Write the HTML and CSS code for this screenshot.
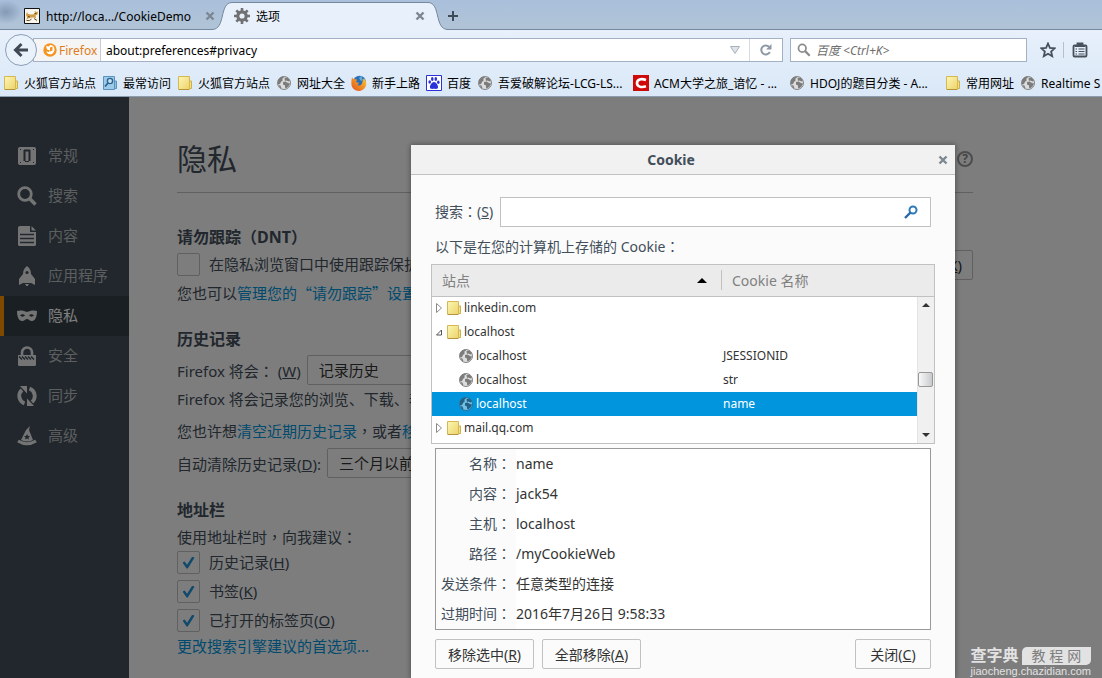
FILE: index.html
```html
<!DOCTYPE html>
<html lang="zh-CN">
<head>
<meta charset="utf-8">
<title>选项</title>
<link rel="stylesheet" href="styles.css">
</head>
<body>
<svg class="defs" aria-hidden="true">
  <defs>
    <linearGradient id="folder-fill" x1="0" y1="0" x2="1" y2="1"><stop offset="0" stop-color="#fdf6b8"/><stop offset="1" stop-color="#ecd366"/></linearGradient>
    <linearGradient id="fox-fill" x1="1" y1="0" x2="0" y2="1"><stop offset="0" stop-color="#ffcb2e"/><stop offset="1" stop-color="#e2501c"/></linearGradient>
  </defs>
  <symbol id="folder" viewBox="0 0 16 16">
    <path d="M12 6h2.500v7.500h-3z" fill="#f3df80" stroke="#cdb04a"/>
    <path d="M1.500 1.500h11v13h-11z" fill="url(#folder-fill)" stroke="#d3b854"/>
    <path d="M2 14.500h10" stroke="#b3943c"/>
  </symbol>
  <symbol id="smart-folder" viewBox="0 0 16 16">
    <path d="M12 6h2.500v7.500h-3z" fill="#8fc0e2" stroke="#5c93bd"/>
    <path d="M1.500 1.500h11v13h-11z" fill="#9ccbea" stroke="#5c93bd"/>
    <circle cx="8" cy="6" r="2.600" fill="#c6e3f5" stroke="#2f6491" stroke-width="1.400"/>
    <path d="M6 8l-3 3.500" stroke="#2f6491" stroke-width="1.800"/>
  </symbol>
  <symbol id="globe" viewBox="0 0 16 16">
    <circle cx="8" cy="8" r="6.500" fill="currentColor" stroke="#858585"/>
    <path d="M2 5l2-2.500 3-1 1 1-2 1.500 1 1-2 2-1 2-2 .5zM8.500 3l3-.5 2.500 3-1.500 1-2-1-1.500.5zM7 7l2.500-.5 2.500 1.500 2 .5-1.500 3-2.500 2-1-1 0-2-2-1zM2.500 10l2 .5 1 3-1.500-.5z" fill="#7c7c7c"/>
  </symbol>
  <symbol id="firefox" viewBox="0 0 16 16">
    <circle cx="8.500" cy="7" r="6.300" fill="#2c6fb5"/>
    <path d="M8 3c1-1.500 3-2 4-1.500l-1.500 1.500 1.500 2-2 1z" fill="#5fb0df"/>
    <path d="M1 2.500l1.500 1.500L6 4.500 5 7l3 1-1.500 2c2.500 1.500 5-.5 5-3.500l1-3c2 1 3 3 2.700 6-.5 4-4 6.500-7.500 6.500C4 16 .5 13 .4 9 .3 6 .6 4 1 2.500z" fill="url(#fox-fill)"/>
  </symbol>
  <symbol id="close" viewBox="0 0 10 10"><path d="M1.500 1.500l7 7M8.500 1.500l-7 7" stroke="#7c8791" stroke-width="2.400"/></symbol>
  <symbol id="magnifier" viewBox="0 0 16 16"><circle cx="6" cy="6" r="4.300" fill="none" stroke="currentColor" stroke-width="2"/><path d="M9 9l5.500 5.500" stroke="currentColor" stroke-width="2.600"/></symbol>
</svg>

<header class="chrome">
  <div class="tabstrip">
    <div class="tab">
      <svg class="icon16" viewBox="0 0 16 16"><path d="M.5.5h15v15H.5z" fill="#f7f5ee" stroke="#111"/><path d="M3 4l1 2 3 .5c2 0 3-.5 4-1.500l-.5-2 2 1 1.500-.5-.5 3-2 1 .5 3-2-1H7l-3 1-1.500 1.500L3 9 2 7z" fill="#d09c45"/><path d="M2.500 12.500h3l2-1.500M10 10.500l3 2M4 8.500l2 .5M10.500 5.500h2" fill="none" stroke="#6d5224"/></svg>
      <span class="tab-label">http://loca.../CookieDemo</span>
      <button class="plain" aria-label="关闭标签页"><svg class="icon10"><use href="#close"/></svg></button>
    </div>
    <div class="tab-active">
      <svg class="curve" viewBox="0 0 20 30"><path d="M0 29.500C14 29.500 7 2.500 20 2.500V30H0z" fill="#e7f0fb"/><path d="M0 29.500C14 29.500 7 2.500 20 2.500" fill="none" stroke="#76889d"/></svg>
      <div class="tab-body">
        <svg class="icon16" viewBox="0 0 16 16"><circle cx="8" cy="8" r="4.200" fill="none" stroke="#6f7173" stroke-width="3.200"/><path d="M8 0v3M8 13v3M0 8h3M13 8h3M2.300 2.300l2.200 2.200M11.500 11.500l2.200 2.200M13.700 2.300l-2.200 2.200M4.500 11.500l-2.200 2.200" stroke="#6f7173" stroke-width="2.600"/></svg>
        <span class="tab-label">选项</span>
        <button class="plain" aria-label="关闭标签页"><svg class="icon10"><use href="#close"/></svg></button>
      </div>
      <svg class="curve" viewBox="0 0 20 30"><path d="M0 2.500C13 2.500 6 29.500 20 29.500V30H0z" fill="#e7f0fb"/><path d="M0 2.500C13 2.500 6 29.500 20 29.500" fill="none" stroke="#76889d"/></svg>
    </div>
    <button class="plain new-tab" aria-label="新标签页"><svg class="icon10" viewBox="0 0 10 10"><path d="M5 0v10M0 5h10" stroke="#3f4b57" stroke-width="2"/></svg></button>
  </div>

  <div class="navbar">
    <button class="back" aria-label="后退"><svg class="icon16" viewBox="0 0 16 16"><path d="M8.500 2L2.500 8l6 6M3 8h12" fill="none" stroke="#404a54" stroke-width="3"/></svg></button>
    <div class="urlbar">
      <span class="identity">
        <svg class="icon14" viewBox="0 0 14 14"><circle cx="7" cy="7" r="6.700" fill="#f79420"/><path d="M3 3l3 .5 1-1.500c3 0 4.500 2 4.500 4.500S9.500 11.500 7 11.300C5 11 3.500 10 3.300 8.500L6 9l1-1.500L4 6.500z" fill="#fff"/><path d="M7 4.500l2.500-1v4L7 8.500z" fill="#f79420"/></svg>
        Firefox
      </span>
      <input class="url-input" aria-label="地址" value="about:preferences#privacy">
      <button class="plain drop" aria-label="显示历史"><svg class="icon10" viewBox="0 0 10 10"><path d="M.5 1.500h9L5 8.500z" fill="#dfe4ea" stroke="#a9b0b8"/></svg></button>
      <button class="plain reload" aria-label="刷新"><svg class="icon14" viewBox="0 0 14 14"><path d="M10.800 9A4.500 4.500 0 1 1 10 3.800" fill="none" stroke="#8d99a6" stroke-width="2"/><path d="M12.500 1v5.500H7z" fill="#8d99a6"/></svg></button>
    </div>
    <div class="searchbar">
      <svg class="icon14 gray"><use href="#magnifier"/></svg>
      <input class="search-input" aria-label="搜索" placeholder="百度 &lt;Ctrl+K&gt;">
    </div>
    <button class="plain star" aria-label="收藏"><svg class="icon16" viewBox="0 0 16 16"><path d="M8 1.500l1.900 4.400 4.800.4-3.600 3.200 1.100 4.700L8 11.700l-4.200 2.500 1.100-4.700L1.300 6.300l4.800-.4z" fill="none" stroke="#47515b" stroke-width="1.800"/></svg></button>
    <button class="plain list" aria-label="书签"><svg class="icon16" viewBox="0 0 16 16"><path d="M5.500 3V1.500h5V3M2.500 3.500h11q1 0 1 1v9q0 1-1 1h-11q-1 0-1-1v-9q0-1 1-1z" fill="none" stroke="#47515b" stroke-width="1.800"/><path d="M3 3h10v2H3z" fill="#47515b"/><path d="M3.500 7h1.500M6.500 7h6M3.500 9.500h1.500M6.500 9.500h6M3.500 12h1.500M6.500 12h6" stroke="#47515b" stroke-width="1.200"/></svg></button>
  </div>

  <nav class="bookmarks">
    <a href="#"><svg class="icon16"><use href="#folder"/></svg>火狐官方站点</a>
    <a href="#"><svg class="icon16"><use href="#smart-folder"/></svg>最常访问</a>
    <a href="#"><svg class="icon16"><use href="#folder"/></svg>火狐官方站点</a>
    <a href="#"><svg class="icon16 globe"><use href="#globe"/></svg>网址大全</a>
    <a href="#"><svg class="icon16"><use href="#firefox"/></svg>新手上路</a>
    <a href="#"><svg class="icon16" viewBox="0 0 16 16"><path d="M.5.500h15v15H.5z" fill="#fff" stroke="#2b32d9"/><g fill="#2b32d9"><ellipse cx="3.700" cy="7" rx="1.300" ry="1.800"/><ellipse cx="6.300" cy="4" rx="1.300" ry="1.900"/><ellipse cx="9.800" cy="4" rx="1.300" ry="1.900"/><ellipse cx="12.300" cy="7.300" rx="1.300" ry="1.800"/><path d="M8 7c2 0 4.500 3.500 4 5.500s-2.500 1.300-4 1.300-3.500.7-4-1.300S6 7 8 7z"/></g></svg>百度</a>
    <a href="#" class="long"><svg class="icon16 globe"><use href="#globe"/></svg>吾爱破解论坛-LCG-LS...</a>
    <a href="#" class="long"><svg class="icon16" viewBox="0 0 16 16"><path d="M0 0h16v16H0z" fill="#cf0808"/><path d="M13 5C8 3 4 4.500 4 8s4 5 9 3.300" fill="none" stroke="#fff" stroke-width="2.600"/></svg>ACM大学之旅_谙忆 - ...</a>
    <a href="#" class="long"><svg class="icon16 globe"><use href="#globe"/></svg>HDOJ的题目分类 - A...</a>
    <a href="#"><svg class="icon16"><use href="#folder"/></svg>常用网址</a>
    <a href="#"><svg class="icon16 globe"><use href="#globe"/></svg>Realtime S</a>
  </nav>
</header>

<main class="page">
  <nav class="sidebar">
    <a href="#"><svg class="icon20" viewBox="0 0 20 20"><rect x="1" y="1" width="18" height="18" rx="2" fill="currentColor"/><path d="M7 4.500h6M7.500 4v11M12.500 4v11" stroke="#424f5a" stroke-width="2" fill="none"/><path d="M8 15.500h4" stroke="#424f5a"/><path d="M3 3h1v1H3zM16 3h1v1h-1zM3 16h1v1H3zM16 16h1v1h-1z" fill="#424f5a"/></svg>常规</a>
    <a href="#"><svg class="icon20" viewBox="0 0 20 20"><circle cx="8" cy="8" r="6.300" fill="none" stroke="currentColor" stroke-width="2.800"/><path d="M12.500 12.500l6 6" stroke="currentColor" stroke-width="3.600"/></svg>搜索</a>
    <a href="#"><svg class="icon20" viewBox="0 0 20 20"><path d="M3 0h10v6h6v12.500q0 1.500-1.500 1.500h-15Q1 20 1 18.500v-17Q1 0 3 0zM14.500 0L19 4.500h-4.500z" fill="currentColor"/><path d="M3 8.500h14M3 12.500h14M3 16.500h14" stroke="#424f5a" stroke-width="1.500"/></svg>内容</a>
    <a href="#"><svg class="icon20" viewBox="0 0 20 20"><path d="M10 0c3 2 4 5 4 8l4 5v6l-4-2H6l-4 2v-6l4-5c0-3 1-6 4-8z" fill="currentColor"/><path d="M8 18h4l-2 3z" fill="currentColor"/><circle cx="10" cy="6.500" r="1.600" fill="#424f5a"/></svg>应用程序</a>
    <a href="#" class="selected"><svg class="icon20" viewBox="0 0 20 20"><path d="M0 5c3-1 7-.5 10 1 3-1.500 7-2 10-1 0 6-2 10-5 10-2.500 0-3.500-2-5-2s-2.500 2-5 2C2 15 0 11 0 5z" fill="currentColor"/><path d="M3 9.500q3-2.500 5 0-2.500 2.300-5 0zM12 9.500q2-2.500 5 0-2.500 2.300-5 0z" fill="#343f48"/></svg>隐私</a>
    <a href="#"><svg class="icon20" viewBox="0 0 20 20"><path d="M5 9V6.500a5 5 0 0 1 10 0V9" fill="none" stroke="currentColor" stroke-width="2.600"/><path d="M1 9h18v9.500q0 1.500-1.500 1.500h-15Q1 20 1 18.500z" fill="currentColor"/><path d="M2 10.500l3 3M5 10.500l3 3M8 10.500l3 3M11 10.500l3 3M14 10.500l3 3" stroke="#424f5a" stroke-width="1.500"/></svg>安全</a>
    <a href="#"><svg class="icon20" viewBox="0 0 20 20"><path d="M7.500 17.500A8 8 0 0 1 5 4M12.500 2.500A8 8 0 0 1 15 16" fill="none" stroke="currentColor" stroke-width="3.800"/><path d="M3 0h7v7.500zM17 20h-7v-7.500z" fill="currentColor"/></svg>同步</a>
    <a href="#"><svg class="icon20" viewBox="0 0 20 20"><path d="M4 14L9 4l4-4-1 4 4 10q-6 3-12 0z" fill="currentColor"/><path d="M10 8l1 2h2l-1.500 1.500.5 2-2-1-2 1 .5-2L7 10h2z" fill="#424f5a"/><path d="M1 15q9 5.500 18 0" fill="none" stroke="currentColor" stroke-width="3.200"/></svg>高级</a>
  </nav>

  <section class="prefs">
    <div class="prefs-head">
      <h1>隐私</h1>
      <button class="help" aria-label="帮助">?</button>
    </div>

    <h2>请勿跟踪<span class="punct" lang="zh-Hant">（</span>DNT<span class="punct" lang="zh-Hant">）</span></h2>
    <div class="row check-row">
      <input type="checkbox" id="tracking">
      <label for="tracking">在隐私浏览窗口中使用跟踪保护</label>
      <button class="box-button change">(<u>X</u>)</button>
    </div>
    <p class="line">您也可以<a href="#">管理您的<span class="punct">“</span>请勿跟踪<span class="punct">”</span>设置</a></p>

    <h2 class="gap">历史记录</h2>
    <div class="row">
      <label for="mode">Firefox 将会<span class="punct" lang="zh-Hant">：</span> (<u>W</u>)</label>
      <select id="mode" class="box-select"><option>记录历史</option></select>
    </div>
    <p class="line">Firefox 将会记录您的浏览、下载、表单</p>
    <p class="line tall">您也许想<a href="#">清空近期历史记录</a><span class="punct" lang="zh-Hant">，</span>或者<a href="#">移除</a></p>
    <div class="row">
      <label for="expire">自动清除历史记录(<u>D</u>):</label>
      <select id="expire" class="box-select"><option>三个月以前</option></select>
    </div>

    <h2 class="gap">地址栏</h2>
    <p class="line short">使用地址栏时<span class="punct" lang="zh-Hant">，</span>向我建议<span class="punct" lang="zh-Hant">：</span></p>
    <div class="row check-row"><input type="checkbox" id="hist" checked><label for="hist">历史记录(<u>H</u>)</label></div>
    <div class="row check-row"><input type="checkbox" id="marks" checked><label for="marks">书签(<u>K</u>)</label></div>
    <div class="row check-row"><input type="checkbox" id="open" checked><label for="open">已打开的标签页(<u>O</u>)</label></div>
    <p class="line short"><a href="#">更改搜索引擎建议的首选项...</a></p>
  </section>

  <div class="overlay">
    <div class="dialog" role="dialog" aria-labelledby="dlg-title">
      <div class="dialog-head">
        <h2 id="dlg-title">Cookie</h2>
        <button class="plain" aria-label="关闭"><svg class="icon10"><use href="#close"/></svg></button>
      </div>
      <div class="dialog-body">
        <div class="filter">
          <label for="filter">搜索<span class="punct" lang="zh-Hant">：</span>(<u>S</u>)</label>
          <div class="filter-box">
            <input id="filter" type="text">
            <svg class="icon14" viewBox="0 0 14 14"><circle cx="9" cy="5" r="3.500" fill="none" stroke="#2f7ab8" stroke-width="2"/><path d="M6.500 7.500L1 13" stroke="#2b67a5" stroke-width="2.400"/></svg>
          </div>
        </div>
        <p class="intro">以下是在您的计算机上存储的 Cookie<span class="punct" lang="zh-Hant">：</span></p>
        <div class="tree">
          <table>
            <colgroup><col class="col-site"><col></colgroup>
            <thead>
              <tr><th><span class="th-in">站点<svg class="sort" viewBox="0 0 10 5"><path d="M5 0l5 5H0z"/></svg></span></th><th><span class="th-in split">Cookie 名称</span></th></tr>
            </thead>
            <tbody>
              <tr><td><span class="cell"><svg class="twisty" viewBox="0 0 10 10"><path d="M2.500.5l5 4.500-5 4.500z" fill="#fff" stroke="#8a8a8a"/></svg><svg class="icon16"><use href="#folder"/></svg>linkedin.com</span></td><td></td></tr>
              <tr><td><span class="cell"><svg class="twisty" viewBox="0 0 10 10"><path d="M7.500 3v5h-5z" fill="#fff" stroke="#555"/></svg><svg class="icon16"><use href="#folder"/></svg>localhost</span></td><td></td></tr>
              <tr><td><span class="cell child"><svg class="icon16 globe"><use href="#globe"/></svg>localhost</span></td><td>JSESSIONID</td></tr>
              <tr><td><span class="cell child"><svg class="icon16 globe"><use href="#globe"/></svg>localhost</span></td><td>str</td></tr>
              <tr class="current"><td><span class="cell child"><svg class="icon16" viewBox="0 0 16 16"><circle cx="8" cy="8" r="6.500" fill="#6fbfe6" stroke="#2f6f93"/><path d="M2 5l2-2.500 3-1 1 1-2 1.500 1 1-2 2-1 2-2 .5zM8.500 3l3-.5 2.500 3-1.500 1-2-1-1.500.5zM7 7l2.500-.5 2.500 1.500 2 .5-1.500 3-2.500 2-1-1 0-2-2-1zM2.500 10l2 .5 1 3-1.500-.5z" fill="#235f83"/></svg>localhost</span></td><td>name</td></tr>
              <tr><td><span class="cell"><svg class="twisty" viewBox="0 0 10 10"><path d="M2.500.5l5 4.500-5 4.500z" fill="#fff" stroke="#8a8a8a"/></svg><svg class="icon16"><use href="#folder"/></svg>mail.qq.com</span></td><td></td></tr>
            </tbody>
          </table>
          <div class="scrollbar">
            <svg class="arrow" viewBox="0 0 8 4"><path d="M4 0l4 4H0z"/></svg>
            <span class="thumb"></span>
            <svg class="arrow" viewBox="0 0 8 4"><path d="M0 0h8L4 4z"/></svg>
          </div>
        </div>
        <dl class="details">
          <dt>名称<span class="punct" lang="zh-Hant">：</span></dt><dd>name</dd>
          <dt>内容<span class="punct" lang="zh-Hant">：</span></dt><dd>jack54</dd>
          <dt>主机<span class="punct" lang="zh-Hant">：</span></dt><dd>localhost</dd>
          <dt>路径<span class="punct" lang="zh-Hant">：</span></dt><dd>/myCookieWeb</dd>
          <dt>发送条件<span class="punct" lang="zh-Hant">：</span></dt><dd>任意类型的连接</dd>
          <dt>过期时间<span class="punct" lang="zh-Hant">：</span></dt><dd>2016年7月26日 9:58:33</dd>
        </dl>
        <div class="actions">
          <button class="box-button wide">移除选中(<u>R</u>)</button>
          <button class="box-button wide">全部移除(<u>A</u>)</button>
          <button class="box-button last">关闭(<u>C</u>)</button>
        </div>
      </div>
    </div>
  </div>

  <div class="watermark">
    <div class="mark-top"><b>查字典</b><span>教 程 网</span></div>
    <div class="mark-url">jiaocheng.chazidian.com</div>
  </div>
</main>
</body>
</html>
```
FILE: styles.css
```css
* { box-sizing: border-box; }
body {
  margin: 0;
  height: 100vh;
  display: flex;
  flex-direction: column;
  overflow: hidden;
  font-family: "Noto Sans", "Noto Sans CJK SC", sans-serif;
  font-size: 12px;
  color: #000;
}
h1, h2, p, dl, dd { margin: 0; }
svg { display: block; flex: none; }
a { text-decoration: none; }
button, input, select { font: inherit; }
.defs { position: absolute; width: 0; height: 0; }
.icon10 { width: 10px; height: 10px; }
.icon14 { width: 14px; height: 14px; }
.icon16 { width: 16px; height: 16px; }
.icon20 { width: 20px; height: 20px; }
.globe { color: #dcdcdc; }
.gray { color: #8c8c8c; }
.punct { font-family: "Noto Sans CJK SC", sans-serif; line-height: 1; }
.punct[lang] { font-family: "Noto Sans CJK TC", sans-serif; }
.plain {
  border: 0;
  padding: 0;
  background: none;
  display: flex;
  align-items: center;
  justify-content: center;
}

/* Browser toolbars */
.chrome {
  flex: none;
  background: linear-gradient(#e7f0fb 30px, #dae8f7);
  border-bottom: 1px solid #8d9db0;
}
.tabstrip {
  height: 30px;
  display: flex;
  background:
    radial-gradient(16px 12px at 6px 12px, rgba(90, 115, 145, 0.5), transparent),
    linear-gradient(#a9bfdb, #b1c4d6);
  box-shadow: inset 0 -1px #76889d;
}
.tab {
  width: 212px;
  padding: 2px 0 0 24px;
  display: flex;
  align-items: center;
  gap: 6px;
}
.tab-label { flex: 1; white-space: nowrap; }
.tab > .plain { padding-right: 3px; margin-right: -6px; }
.tab-active { display: flex; }
.curve { width: 20px; height: 30px; }
.tab-body {
  width: 196px;
  margin-top: 2px;
  border-top: 1px solid #76889d;
  background: #e7f0fb;
  padding: 0 3px 1px 2px;
  display: flex;
  align-items: center;
  gap: 6px;
}
.new-tab { margin-top: 2px; }
.navbar {
  height: 40px;
  padding: 0 14px 0 5px;
  display: flex;
  align-items: center;
}
.back {
  width: 32px;
  height: 32px;
  padding: 0;
  border: 1px solid #8b9eb8;
  border-radius: 50%;
  background: #e9f1fb;
  display: flex;
  align-items: center;
  justify-content: center;
  z-index: 1;
}
.urlbar {
  flex: 1;
  height: 24px;
  margin: 0 7px 0 -4px;
  border: 1px solid #a2b1c4;
  background: #fff;
  display: flex;
  align-items: stretch;
}
.identity {
  width: 67px;
  padding-left: 9px;
  display: flex;
  align-items: center;
  gap: 2px;
  background: #f5f5f5;
  border-right: 1px solid #c8ccd2;
  color: #e07c1c;
}
.url-input, .search-input {
  flex: 1;
  min-width: 0;
  border: 0;
  padding: 0 5px;
  background: none;
  outline: 0;
}
.search-input::placeholder { color: #6e6e6e; font-style: italic; }
.drop { width: 28px; }
.reload { width: 33px; border-left: 1px solid #d4dae1; }
.searchbar {
  width: 237px;
  height: 24px;
  padding-left: 6px;
  border: 1px solid #a2b1c4;
  background: #fff;
  display: flex;
  align-items: center;
}
.star { width: 37px; height: 16px; padding-left: 5px; border-right: 1px solid #b3c0cf; }
.list { width: 24px; padding-left: 7px; }
.bookmarks {
  height: 26px;
  padding-left: 3px;
  display: flex;
  align-items: center;
  gap: 6px;
  overflow: hidden;
}
.bookmarks a {
  flex: none;
  display: flex;
  align-items: center;
  gap: 5px;
  color: #000;
  white-space: nowrap;
}
.bookmarks .long { min-width: 150px; }

/* Preferences page */
.page {
  flex: 1;
  min-height: 0;
  position: relative;
  display: flex;
  overflow: hidden;
  background: #fbfbfb;
  color: #424e5a;
  font-size: 15px;
}
.sidebar {
  flex: none;
  width: 129px;
  padding-top: 39px;
  background: #424f5a;
}
.sidebar a {
  height: 40px;
  padding: 0 0 4px 17px;
  display: flex;
  align-items: center;
  gap: 11px;
  color: #b9bcbf;
}
.sidebar svg { margin-top: 4px; color: #e8e8e8; }
.sidebar .selected {
  padding-left: 13px;
  border-left: 4px solid #ff9500;
  background: #343f48;
  color: #fff;
}
.prefs { flex: 1; max-width: 844px; padding: 39px 0 0 48px; white-space: nowrap; }
.prefs a { color: #0095dd; }
.prefs-head {
  height: 57px;
  margin-bottom: 31px;
  padding-bottom: 11px;
  border-bottom: 1px solid #c1c1c1;
  display: flex;
  align-items: center;
  justify-content: space-between;
}
h1 { font-size: 30px; font-weight: 400; line-height: 46px; }
.help {
  width: 16px;
  height: 16px;
  padding: 0;
  border: 2px solid #999;
  border-radius: 50%;
  background: none;
  color: #888;
  font-size: 12px;
  font-weight: 700;
  line-height: 12px;
}
.prefs h2 { font-size: 16px; font-weight: 700; line-height: 26px; }
.prefs h2.gap { margin: 19px 0 3px; }
.row { height: 30px; display: flex; align-items: center; gap: 6px; }
.check-row { height: 29px; gap: 9px; }
.check-row label { padding-bottom: 2px; }
.change { margin-left: auto; }
.line { line-height: 28px; }
.line.tall { padding-top: 1px; line-height: 34px; }
.line.short { line-height: 22px; }
input[type="checkbox"] {
  appearance: none;
  width: 23px;
  height: 23px;
  margin: 0;
  border: 1px solid #c1c1c1;
  border-radius: 2px;
  background: #fbfbfb;
  display: grid;
  place-items: center;
}
input[type="checkbox"]:checked::before {
  content: "";
  width: 12px;
  height: 12px;
  background: #1f93d6;
  clip-path: polygon(0 50%, 18% 42%, 38% 68%, 82% 0, 100% 10%, 44% 100%, 34% 100%);
}
.box-select {
  appearance: none;
  width: 220px;
  height: 30px;
  padding: 0 11px;
  border: 1px solid #c1c1c1;
  border-radius: 2px;
  background: #fbfbfb;
  color: #333;
}
.box-button {
  height: 30px;
  padding: 0 10px;
  border: 1px solid #c1c1c1;
  border-radius: 2px;
  background: #fbfbfb;
  color: #333;
  white-space: nowrap;
}

/* Cookie dialog */
.overlay {
  position: absolute;
  inset: 0;
  padding: 48px 0 0 411px;
  background: rgba(0, 0, 0, 0.5);
}
.dialog {
  max-width: 544px;
  height: 100%;
  background: #fbfbfb;
  border-radius: 2px 2px 0 0;
  box-shadow: 0 0 5px 1px rgba(0, 0, 0, 0.3);
  font-size: 14px;
}
.dialog-head {
  height: 30px;
  padding: 0 7px 0 17px;
  display: flex;
  align-items: center;
  background: #f1f1f1;
  border-bottom: 1px solid #c1c1c1;
}
.dialog-head h2 { flex: 1; padding-right: 24px; text-align: center; font-size: 14px; line-height: 20px; }
.dialog-body { padding: 22px 24px 0; }
.filter { display: flex; align-items: center; gap: 7px; white-space: nowrap; }
.filter label { padding-bottom: 2px; }
.filter-box {
  flex: 1;
  height: 30px;
  padding-right: 12px;
  display: flex;
  align-items: center;
  border: 1px solid #c1c1c1;
  background: #fff;
}
.filter-box input { flex: 1; min-width: 0; border: 0; background: none; outline: 0; }
.intro { line-height: 20px; padding: 10px 0 7px; }
.tree {
  margin: 0 -4px 4px;
  height: 180px;
  position: relative;
  border: 1px solid #c1c1c1;
  background: #fff;
}
table { width: 100%; border-collapse: collapse; table-layout: fixed; font-size: 12px; color: #333; }
.col-site { width: 289px; }
th {
  height: 31px;
  padding: 0;
  background: #ebebeb;
  border-bottom: 1px solid #c1c1c1;
  font-size: 14px;
  font-weight: 400;
  color: #808080;
}
.th-in {
  height: 20px;
  padding: 0 14px 0 10px;
  display: flex;
  align-items: center;
  justify-content: space-between;
}
.split { border-left: 1px solid #c1c1c1; }
.sort { width: 10px; height: 5px; fill: #000; }
td { height: 24px; padding: 0 2px; line-height: 20px; }
.cell { display: flex; align-items: center; gap: 2px; }
.twisty { width: 10px; height: 10px; }
.child { padding-left: 24px; }
.current { background: #0095dd; color: #fff; }
.scrollbar {
  position: absolute;
  top: 32px;
  right: 0;
  bottom: 0;
  width: 17px;
  padding: 6px 1px 6px 0;
  display: flex;
  flex-direction: column;
  align-items: center;
  background: #f0f0f0;
  border-left: 1px solid #e3e3e3;
}
.arrow { width: 8px; height: 4px; fill: #333; }
.thumb {
  width: 15px;
  height: 15px;
  margin: 65px 0 auto;
  border: 1px solid #979797;
  border-radius: 2px;
  background: linear-gradient(90deg, #f8f8f8, #c8cace);
}
.details {
  display: grid;
  grid-template-columns: 80px 1fr;
  grid-auto-rows: 30px;
  border: 1px solid #999;
  background: #fff;
  line-height: 30px;
}
.details dt { padding-right: 5px; background: #fbfbfb; text-align: right; }
.details dd { color: #333; }
.actions { margin-top: 9px; display: flex; gap: 8px; }
.actions .wide { min-width: 99px; }
.actions .last { min-width: 76px; margin-left: auto; }

.watermark {
  position: absolute;
  right: 11px;
  bottom: 1px;
  color: #e2e2e2;
  font-family: "Liberation Sans", "Noto Sans CJK SC", sans-serif;
}
.mark-top { display: flex; gap: 3px; align-items: center; }
.mark-top b { font-size: 16px; line-height: 18px; }
.mark-top span {
  flex: 1;
  border-radius: 5px 0 5px 0;
  background: #e2e2e2;
  color: #7e7e7e;
  font-size: 14px;
  line-height: 18px;
  text-align: center;
}
.mark-url { font-size: 11px; line-height: 12px; }
```
